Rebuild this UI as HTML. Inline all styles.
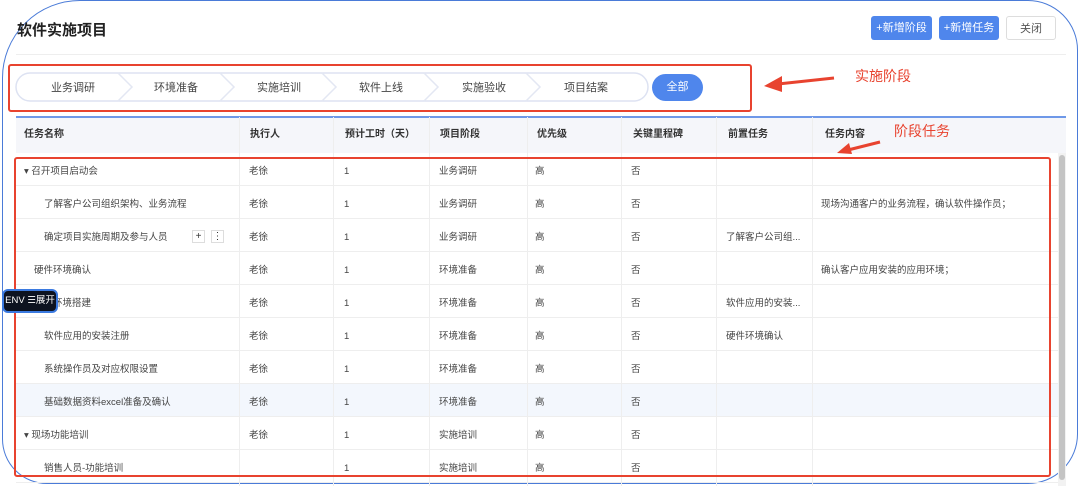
<!DOCTYPE html>
<html><head><meta charset="utf-8"><style>
*{margin:0;padding:0;box-sizing:border-box}
body{width:1080px;height:486px;background:#fff;font-family:"Liberation Sans","Noto Sans CJK SC",sans-serif;color:#333;position:relative;overflow:hidden;font-size:10px}
.frame{position:absolute;left:2px;top:0;width:1076px;height:484px;border:1.5px solid #4a7bd8;border-radius:78px 50px 50px 45px}
.abs{position:absolute}
.title{left:17px;top:19px;font-size:15px;font-weight:bold;color:#222}
.btn{top:16px;height:24px;line-height:24px;border-radius:3px;text-align:center;font-size:11px;color:#fff;background:#4f86ec}
.sep{left:16px;top:54px;width:1050px;height:1px;background:#eee}
.red{border:2px solid #e8432f;border-radius:3px}
.hdr{left:16px;top:116px;width:1050px;height:37px;background:#f5f6fa;border-top:2px solid #6e98e8}
.cell{position:absolute;line-height:33px;font-size:9.5px;color:#444;white-space:nowrap;margin-top:2px}
.row{position:absolute;left:16px;width:1042px;height:33px;border-bottom:1px solid #eee}
.vl{position:absolute;top:117px;width:1px;height:369px;background:#eee}
.h{position:absolute;top:118px;line-height:34px;font-weight:bold;font-size:10px;color:#333}
.note{color:#e8432f;font-size:13px;z-index:5}
</style></head><body>
<div class="frame"></div>
<div class="abs title">软件实施项目</div>
<div class="abs btn" style="left:871px;width:61px">+新增阶段</div>
<div class="abs btn" style="left:939px;width:60px">+新增任务</div>
<div class="abs btn" style="left:1006px;width:50px;background:#fff;color:#555;border:1px solid #ddd">关闭</div>
<div class="abs sep"></div>

<svg class="abs" style="left:14px;top:71px" width="640" height="32">
<g fill="#fff" stroke="#dde2f2" stroke-width="1.5">
<path d="M16 2 H620 A14 14 0 0 1 620 30 H16 A14 14 0 0 1 16 2Z"/>
</g>
<g fill="none" stroke="#e3e7f3" stroke-width="1.5">
<path d="M104 2 L118 16 L104 30"/><path d="M206 2 L220 16 L206 30"/><path d="M308 2 L322 16 L308 30"/><path d="M410 2 L424 16 L410 30"/><path d="M512 2 L526 16 L512 30"/>
</g>
<g font-size="11" fill="#444" text-anchor="middle" font-family="Liberation Sans, Noto Sans CJK SC, sans-serif">
<text x="59" y="20">业务调研</text><text x="162" y="20">环境准备</text><text x="265" y="20">实施培训</text><text x="367" y="20">软件上线</text><text x="470" y="20">实施验收</text><text x="572" y="20">项目结案</text>
</g></svg>
<div class="abs" style="left:652px;top:74px;width:51px;height:27px;border-radius:14px;background:#4f86ec;color:#fff;text-align:center;line-height:27px;font-size:11px">全部</div>
<div class="abs red" style="left:8px;top:64px;width:744px;height:48px"></div>

<div class="abs hdr"></div>
<div class="h" style="left:24px">任务名称</div>
<div class="h" style="left:250px">执行人</div>
<div class="h" style="left:345px">预计工时（天）</div>
<div class="h" style="left:440px">项目阶段</div>
<div class="h" style="left:537px">优先级</div>
<div class="h" style="left:633px">关键里程碑</div>
<div class="h" style="left:728px">前置任务</div>
<div class="h" style="left:825px">任务内容</div>

<div class="abs note" style="left:855px;top:66px;font-size:14px">实施阶段</div>
<svg class="abs" style="left:760px;top:72px;z-index:5" width="80" height="24"><path d="M74 6 L18 12" stroke="#e8432f" stroke-width="3"/><path d="M4 14 L22 4 L22 20Z" fill="#e8432f"/></svg>
<div class="abs note" style="left:894px;top:121px;font-size:14px">阶段任务</div>
<svg class="abs" style="left:834px;top:138px;z-index:5" width="50" height="20"><path d="M46 4 L14 12" stroke="#e8432f" stroke-width="3"/><path d="M3 15 L15 5 L18 16Z" fill="#e8432f"/></svg>

<div class="row" style="top:153px"></div><div class="row" style="top:186px"></div><div class="row" style="top:219px"></div><div class="row" style="top:252px"></div><div class="row" style="top:285px"></div><div class="row" style="top:318px"></div><div class="row" style="top:351px"></div><div class="row" style="top:384px;background:#f3f7fd"></div><div class="row" style="top:417px"></div><div class="row" style="top:450px"></div>
<div class="vl" style="left:239px"></div><div class="vl" style="left:333px"></div><div class="vl" style="left:429px"></div><div class="vl" style="left:527px"></div><div class="vl" style="left:621px"></div><div class="vl" style="left:716px"></div><div class="vl" style="left:812px"></div>

<div class="cell" style="left:24px;top:153px">▾ 召开项目启动会</div>
<div class="cell" style="left:44px;top:186px">了解客户公司组织架构、业务流程</div>
<div class="cell" style="left:44px;top:219px">确定项目实施周期及参与人员</div>
<div class="abs" style="left:192px;top:230px;width:13px;height:13px;border:1px solid #ddd;font-size:10px;text-align:center;line-height:11px">+</div>
<div class="abs" style="left:211px;top:230px;width:13px;height:13px;border:1px solid #ddd;font-size:10px;text-align:center;line-height:11px">⋮</div>
<div class="cell" style="left:34px;top:252px">硬件环境确认</div>
<div class="cell" style="left:34px;top:285px">软件环境搭建</div>
<div class="cell" style="left:44px;top:318px">软件应用的安装注册</div>
<div class="cell" style="left:44px;top:351px">系统操作员及对应权限设置</div>
<div class="cell" style="left:44px;top:384px">基础数据资料excel准备及确认</div>
<div class="cell" style="left:24px;top:417px">▾ 现场功能培训</div>
<div class="cell" style="left:44px;top:450px">销售人员-功能培训</div>

<div class="cell" style="left:249px;top:153px">老徐<br>老徐<br>老徐<br>老徐<br>老徐<br>老徐<br>老徐<br>老徐<br>老徐</div>
<div class="cell" style="left:344px;top:153px">1<br>1<br>1<br>1<br>1<br>1<br>1<br>1<br>1<br>1</div>
<div class="cell" style="left:439px;top:153px">业务调研<br>业务调研<br>业务调研<br>环境准备<br>环境准备<br>环境准备<br>环境准备<br>环境准备<br>实施培训<br>实施培训</div>
<div class="cell" style="left:535px;top:153px">高<br>高<br>高<br>高<br>高<br>高<br>高<br>高<br>高<br>高</div>
<div class="cell" style="left:631px;top:153px">否<br>否<br>否<br>否<br>否<br>否<br>否<br>否<br>否<br>否</div>
<div class="cell" style="left:726px;top:219px">了解客户公司组...</div>
<div class="cell" style="left:726px;top:285px">软件应用的安装...</div>
<div class="cell" style="left:726px;top:318px">硬件环境确认</div>
<div class="cell" style="left:821px;top:186px">现场沟通客户的业务流程，确认软件操作员；</div>
<div class="cell" style="left:821px;top:252px">确认客户应用安装的应用环境；</div>

<div class="abs" style="left:1058px;top:153px;width:8px;height:333px;background:#f2f2f2"></div>
<div class="abs" style="left:1059px;top:155px;width:6px;height:325px;background:#c4c4c4;border-radius:3px"></div>

<div class="abs red" style="left:14px;top:157px;width:1037px;height:320px"></div>
<div class="abs" style="left:2px;top:289px;width:56px;height:24px;background:#0d1320;border:2px solid #3b7ae0;border-radius:6px;color:#fff;font-size:9.5px;line-height:20px;text-align:center">ENV ☰展开</div>
</body></html>
